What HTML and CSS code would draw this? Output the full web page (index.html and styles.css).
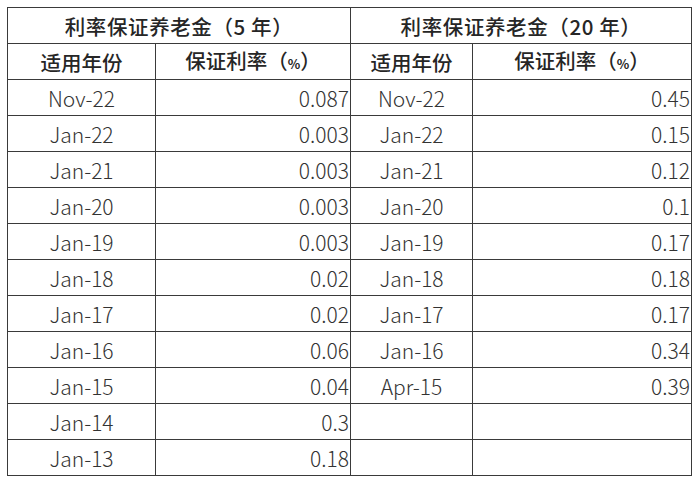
FILE: index.html
```html
<!DOCTYPE html>
<html lang="zh">
<head>
<meta charset="utf-8">
<link rel="stylesheet" href="styles.css">
</head>
<body>
<table class="rates">
  <colgroup>
    <col class="c-year">
    <col class="c-rate">
    <col class="c-year2">
    <col class="c-rate2">
  </colgroup>
  <thead>
    <tr>
      <th colspan="2">利率保证养老金（5 年）</th>
      <th colspan="2">利率保证养老金（20 年）</th>
    </tr>
    <tr>
      <th>适用年份</th>
      <th>保证利率（<span class="pct">%</span>）</th>
      <th>适用年份</th>
      <th>保证利率（<span class="pct">%</span>）</th>
    </tr>
  </thead>
  <tbody>
    <tr><td class="y">Nov-22</td><td class="r">0.087</td><td class="y">Nov-22</td><td class="r">0.45</td></tr>
    <tr><td class="y">Jan-22</td><td class="r">0.003</td><td class="y">Jan-22</td><td class="r">0.15</td></tr>
    <tr><td class="y">Jan-21</td><td class="r">0.003</td><td class="y">Jan-21</td><td class="r">0.12</td></tr>
    <tr><td class="y">Jan-20</td><td class="r">0.003</td><td class="y">Jan-20</td><td class="r">0.1</td></tr>
    <tr><td class="y">Jan-19</td><td class="r">0.003</td><td class="y">Jan-19</td><td class="r">0.17</td></tr>
    <tr><td class="y">Jan-18</td><td class="r">0.02</td><td class="y">Jan-18</td><td class="r">0.18</td></tr>
    <tr><td class="y">Jan-17</td><td class="r">0.02</td><td class="y">Jan-17</td><td class="r">0.17</td></tr>
    <tr><td class="y">Jan-16</td><td class="r">0.06</td><td class="y">Jan-16</td><td class="r">0.34</td></tr>
    <tr><td class="y">Jan-15</td><td class="r">0.04</td><td class="y">Apr-15</td><td class="r">0.39</td></tr>
    <tr><td class="y">Jan-14</td><td class="r">0.3</td><td class="y"></td><td class="r"></td></tr>
    <tr><td class="y">Jan-13</td><td class="r">0.18</td><td class="y"></td><td class="r"></td></tr>
  </tbody>
</table>
</body>
</html>
```

FILE: styles.css
```css
html, body {
  margin: 0;
  padding: 0;
  background: #ffffff;
}
body {
  padding: 7px;
  font-family: "Noto Sans CJK SC", "Noto Sans", sans-serif;
  color: #333333;
}
.rates {
  border-collapse: collapse;
  table-layout: fixed;
  width: 684px;
  border: 1.5px solid #333333;
}
.c-year { width: 148px; }
.c-rate { width: 195px; }
.c-year2 { width: 122px; }
.c-rate2 { width: 219px; }
.rates th,
.rates td {
  border: 1px solid #3a3a3a;
  height: 35px;
  padding: 0 2px;
  font-size: 21px;
  line-height: 24px;
  white-space: nowrap;
  overflow: hidden;
}
.rates th {
  font-weight: 500;
  color: #262626;
  text-align: center;
  font-size: 20.5px;
}
.rates thead tr:first-child th {
  letter-spacing: 0.6px;
}
.pct {
  font-size: 13px;
  font-weight: 700;
}
.rates td.y {
  text-align: center;
  font-weight: 300;
}
.rates td.r {
  text-align: right;
  font-weight: 300;
  padding-right: 1px;
}
```
